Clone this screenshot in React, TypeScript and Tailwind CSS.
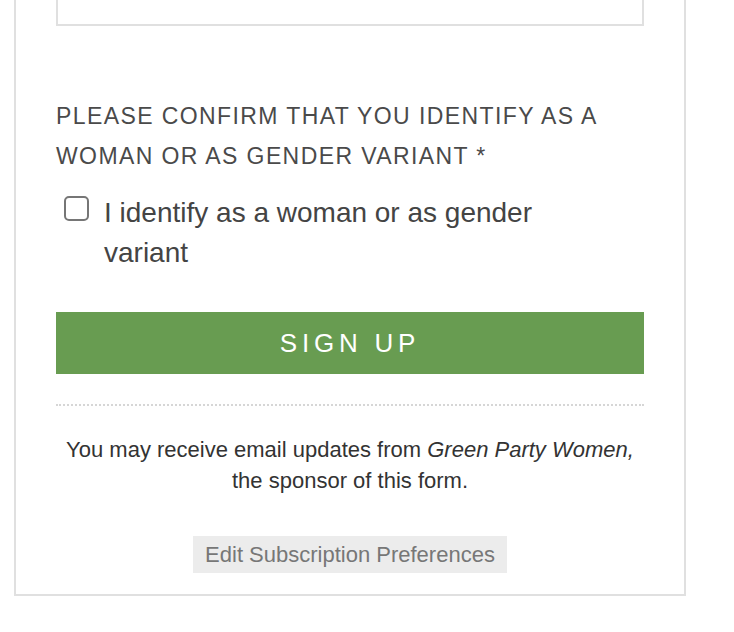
import React from "react";

export default function App() {
  return (
    <div className="min-h-screen bg-white font-['Liberation_Sans',Arial,sans-serif]">
      <div className="ml-[14px] -mt-[100px] w-[672px] border-2 border-[#e0e0e0] px-[40px] pt-[40px] pb-[21px]">
        {/* last text field, mostly scrolled out of view */}
        <div className="h-[84px] w-full border-2 border-[#e0e0e0] bg-white" />

        <p className="mt-[70px] text-[23px] leading-[40px] tracking-[1.4px] text-[#4a4a4a] uppercase">
          Please confirm that you identify as a woman or as gender variant *
        </p>

        <label className="mt-[17px] flex items-start pl-[8px]">
          <span className="mt-[3px] h-[25px] w-[25px] shrink-0 rounded-[5px] border-2 border-[#767676] bg-white" />
          <span className="ml-[15px] max-w-[470px] text-[28px] leading-[40px] text-[#444]">
            I identify as a woman or as gender variant
          </span>
        </label>

        <button className="mt-[39px] flex h-[62px] w-full items-center justify-center bg-[#689c51] text-[26px] tracking-[4.8px] text-white">
          SIGN UP
        </button>

        <div className="mt-[30px] border-t-2 border-dotted border-[#d6d6d6]" />

        <p className="mt-[28px] text-center text-[22px] leading-[31px] text-[#333]">
          You may receive email updates from <em>Green Party Women,</em>
          <br />
          the sponsor of this form.
        </p>

        <div className="mt-[40px] flex justify-center">
          <span className="h-[37px] bg-[#ececec] px-[12px] text-[22px] leading-[37px] text-[#777]">
            Edit Subscription Preferences
          </span>
        </div>
      </div>
    </div>
  );
}
